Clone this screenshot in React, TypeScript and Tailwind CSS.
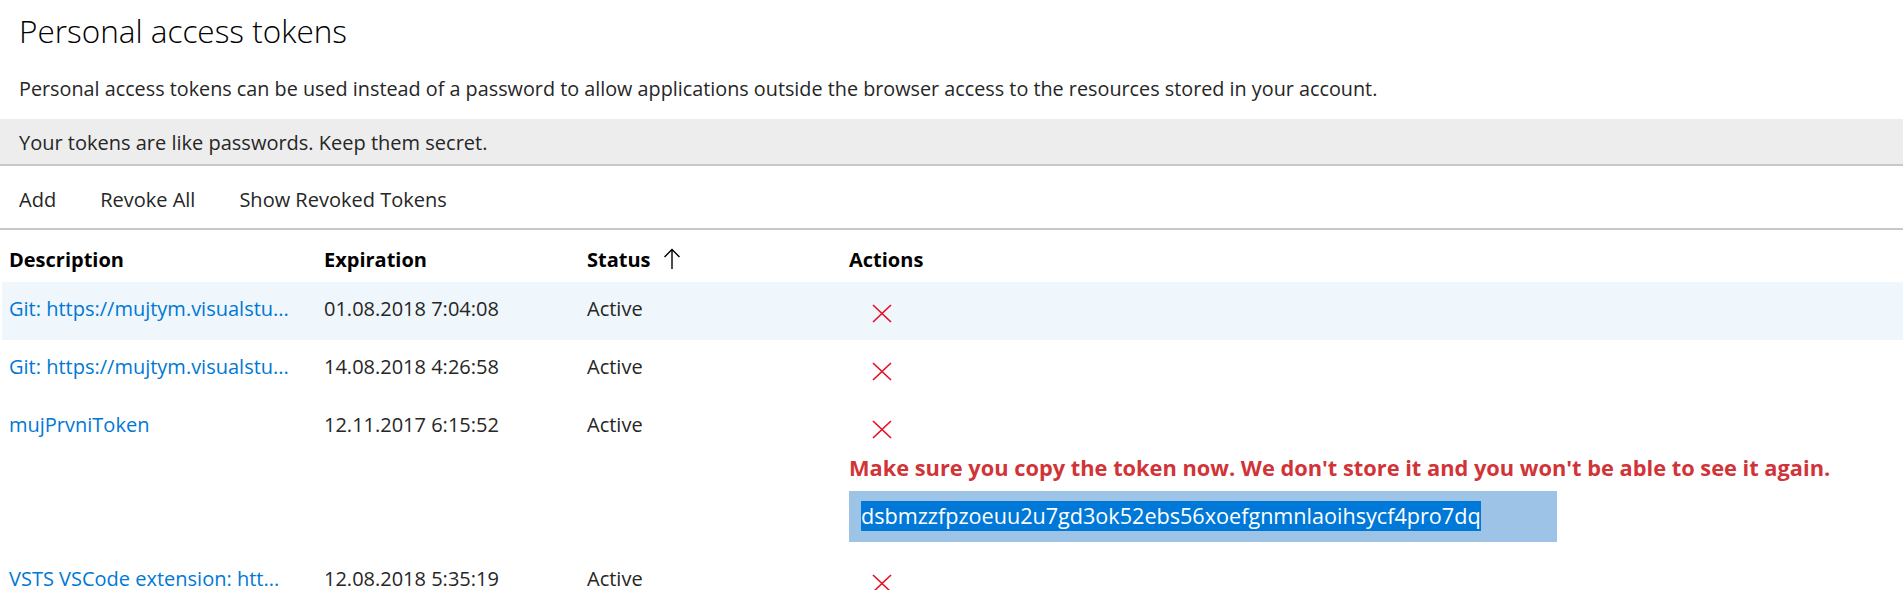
import React from "react";

type Token = {
  name: string;
  expires: string;
  status: string;
  fresh?: boolean;
};

const tokens: Token[] = [
  { name: "Git: https://mujtym.visualstu...", expires: "01.08.2018 7:04:08", status: "Active" },
  { name: "Git: https://mujtym.visualstu...", expires: "14.08.2018 4:26:58", status: "Active" },
  { name: "mujPrvniToken", expires: "12.11.2017 6:15:52", status: "Active", fresh: true },
  { name: "VSTS VSCode extension: htt...", expires: "12.08.2018 5:35:19", status: "Active" },
];

function RevokeIcon() {
  return (
    <svg width="20" height="19" viewBox="0 0 20 19" className="block">
      <path d="M1 1 L19 18 M19 1 L1 18" stroke="#e81123" strokeWidth="1.7" fill="none" />
    </svg>
  );
}

function SortArrow() {
  return (
    <svg width="18" height="22" viewBox="0 0 18 22" className="ml-[12px] inline-block">
      <path d="M9 1.5 L9 21 M1.5 9 L9 1.5 L16.5 9" stroke="#000" strokeWidth="1.4" fill="none" />
    </svg>
  );
}

export default function App() {
  return (
    <div className="min-h-[590px] bg-white font-['Open_Sans','Noto_Sans',sans-serif] text-[20px] text-[#262626]">
      <h1 className="pl-[19px] pt-[11px] text-[31.5px] leading-[40px] font-light text-black">
        Personal access tokens
      </h1>
      <p className="mt-[26px] pl-[19px] text-[19.8px] leading-[24px]">
        Personal access tokens can be used instead of a password to allow applications outside the browser access to the resources stored in your account.
      </p>

      <div className="mt-[18px] bg-[#ededed] pl-[19px] pt-[12px] pb-[9px] leading-[24px] border-b-2 border-[#c8c8c8]">
        Your tokens are like passwords. Keep them secret.
      </div>

      <div className="flex gap-[44px] pl-[19px] pt-[22px] pb-[16px] leading-[24px] border-b-2 border-[#c8c8c8]">
        <button>Add</button>
        <button>Revoke All</button>
        <button>Show Revoked Tokens</button>
      </div>

      <div className="pl-[2px]">
        <div className="grid grid-cols-[315px_263px_262px_1fr] h-[52px] pt-[18px] font-bold text-black leading-[24px]">
          <div className="px-[7px]">Description</div>
          <div className="px-[7px]">Expiration</div>
          <div className="px-[7px] flex items-start">
            Status
            <SortArrow />
          </div>
          <div className="px-[7px]">Actions</div>
        </div>

        {tokens.map((t, i) => (
          <div
            key={i}
            className={
              "grid grid-cols-[315px_263px_262px_1fr] leading-[24px] " +
              (i === 0 ? "bg-[#eff6fc] " : "") +
              (t.fresh ? "h-[154px]" : "h-[58px]")
            }
          >
            <div className="px-[7px] pt-[15px] whitespace-nowrap overflow-hidden text-[#0078d4]">{t.name}</div>
            <div className="px-[7px] pt-[15px]">{t.expires}</div>
            <div className="px-[7px] pt-[15px]">{t.status}</div>
            <div className="px-[7px]">
              <div className="ml-[23px] pt-[22px]">
                <RevokeIcon />
              </div>
              {t.fresh && (
                <>
                  <p className="mt-[16px] text-[21.8px] leading-[26px] font-bold text-[#d13438] whitespace-nowrap">
                    Make sure you copy the token now. We don't store it and you won't be able to see it again.
                  </p>
                  <div className="mt-[10px] w-[708px] h-[51px] bg-[#9dc3e6] pl-[12px] pt-[10px]">
                    <span className="inline-block h-[30px] leading-[30px] text-[21.6px] bg-[#0078d7] text-white">
                      dsbmzzfpzoeuu2u7gd3ok52ebs56xoefgnmnlaoihsycf4pro7dq
                    </span>
                  </div>
                </>
              )}
            </div>
          </div>
        ))}
      </div>
    </div>
  );
}
